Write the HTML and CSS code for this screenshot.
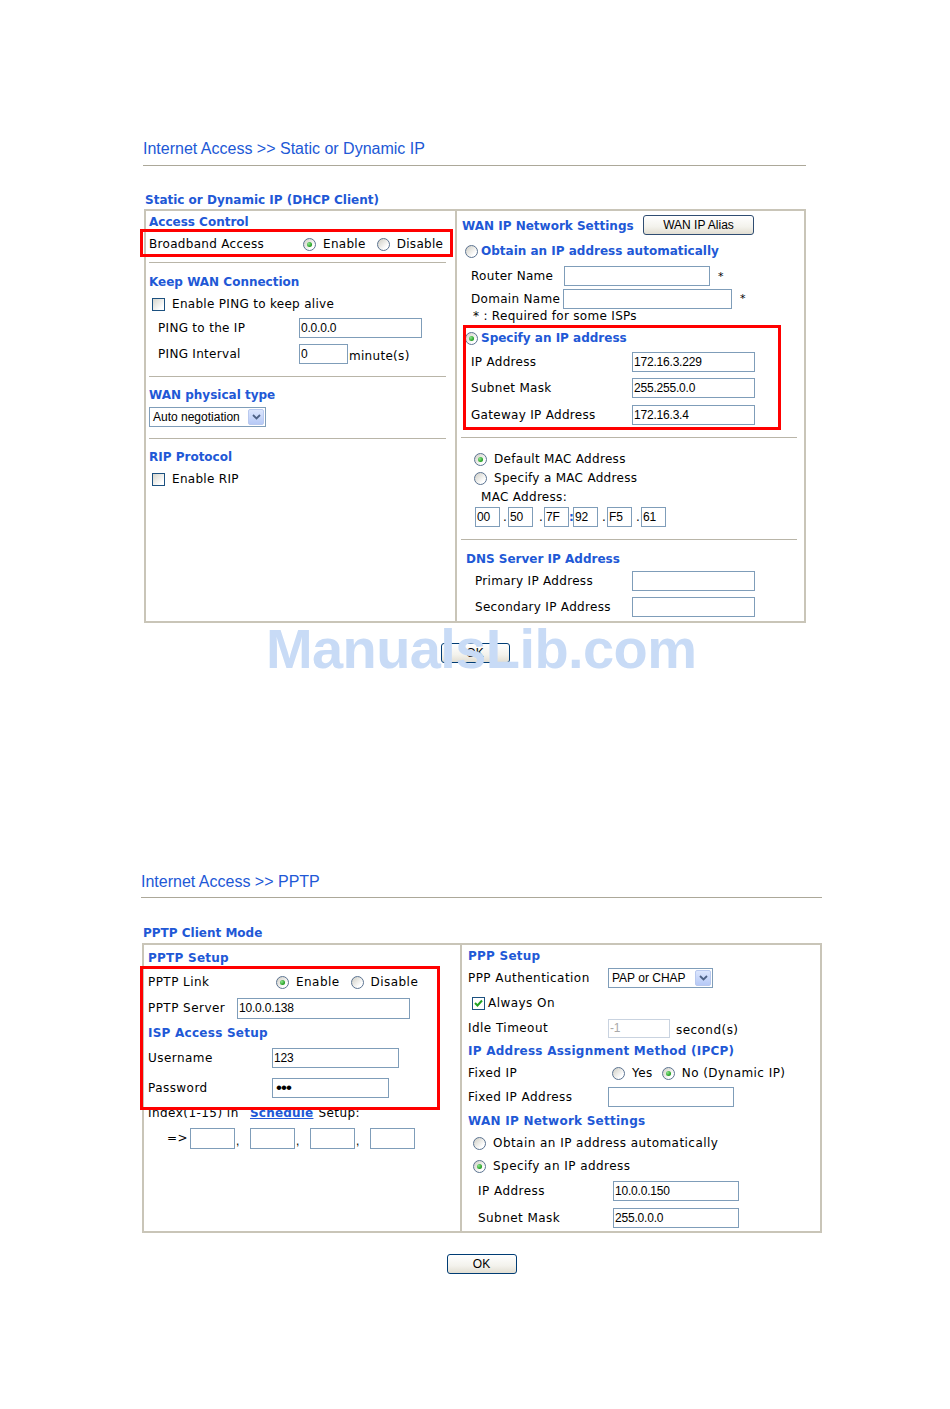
FILE: index.html
```html
<!DOCTYPE html>
<html lang="en">
<head>
    <meta charset="UTF-8">
    <meta name="viewport" content="width=device-width, initial-scale=1.0">
    <title>Internet Access</title>
    <link rel="stylesheet" href="styles.css">
</head>
<body>
    <div class="shot shot-a">
        <h1 class="crumb">Internet Access &gt;&gt; Static or Dynamic IP</h1>
        <div class="sub">Static or Dynamic IP (DHCP Client)</div>
        <div class="panel">
            <div class="col col-left">
                <div class="row head h22">Access Control</div>
                <div class="row h22">
                    <span class="lbl w154">Broadband Access</span>
                    <span class="choice"><span class="radio on"></span>Enable</span>
                    <span class="choice"><span class="radio"></span>Disable</span>
                </div>
                <div class="sep sep-1"></div>
                <div class="row head h24">Keep WAN Connection</div>
                <div class="row h20 in3">
                    <span class="choice"><span class="check"></span>Enable PING to keep alive</span>
                </div>
                <div class="row h28 in9">
                    <span class="lbl w141">PING to the IP</span>
                    <input class="field w123" type="text" value="0.0.0.0">
                </div>
                <div class="row h24 in9">
                    <span class="lbl w141">PING Interval</span>
                    <input class="field w49" type="text" value="0">
                    <span class="unit">minute(s)</span>
                </div>
                <div class="sep sep-2"></div>
                <div class="row head h20">WAN physical type</div>
                <div class="row h24">
                    <div class="select w117">
                        <span>Auto negotiation</span>
                        <span class="arrow"><svg width="9" height="6" viewBox="0 0 9 6"><path d="M1 1 L4.5 4.5 L8 1" fill="none" stroke="#4d6185" stroke-width="1.8"/></svg></span>
                    </div>
                </div>
                <div class="sep sep-3"></div>
                <div class="row head h20">RIP Protocol</div>
                <div class="row h24 in3">
                    <span class="choice"><span class="check"></span>Enable RIP</span>
                </div>
            </div>

            <div class="col col-right">
                <div class="row h22 mt4 top">
                    <span class="head w181 pt5">WAN IP Network Settings</span>
                    <button class="btn alias">WAN IP Alias</button>
                </div>
                <div class="row h28 in3">
                    <span class="choice tight"><span class="radio"></span><span class="head">Obtain an IP address automatically</span></span>
                </div>
                <div class="row h22 in9">
                    <span class="lbl w93">Router Name</span>
                    <input class="field w146" type="text" value="">
                    <span class="star">*</span>
                </div>
                <div class="row h23 in9">
                    <span class="lbl w92">Domain Name</span>
                    <input class="field w169" type="text" value="">
                    <span class="star">*</span>
                </div>
                <div class="row h12 in11 note">* : Required for some ISPs</div>
                <div class="row h20 mt6 in3">
                    <span class="choice tight"><span class="radio on"></span><span class="head">Specify an IP address</span></span>
                </div>
                <div class="row h24 mt2 in9">
                    <span class="lbl w161">IP Address</span>
                    <input class="field w123" type="text" value="172.16.3.229">
                </div>
                <div class="row h24 mt2 in9">
                    <span class="lbl w161">Subnet Mask</span>
                    <input class="field w123" type="text" value="255.255.0.0">
                </div>
                <div class="row h24 mt3 in9">
                    <span class="lbl w161">Gateway IP Address</span>
                    <input class="field w123" type="text" value="172.16.3.4">
                </div>
                <div class="sep sep-4"></div>
                <div class="row h20 in12">
                    <span class="choice"><span class="radio on"></span>Default MAC Address</span>
                </div>
                <div class="row h18 in12">
                    <span class="choice"><span class="radio"></span>Specify a MAC Address</span>
                </div>
                <div class="row h18 mt1 in19">MAC Address:</div>
                <div class="row h20 mt1 in13 mac">
                    <input class="field" type="text" value="00">
                    <span class="dot d8">.</span>
                    <input class="field" type="text" value="50">
                    <span class="dot d11">.</span>
                    <input class="field" type="text" value="7F">
                    <span class="colon">:</span>
                    <input class="field" type="text" value="92">
                    <span class="dot d9">.</span>
                    <input class="field" type="text" value="F5">
                    <span class="dot d9">.</span>
                    <input class="field" type="text" value="61">
                </div>
                <div class="sep sep-5"></div>
                <div class="row head h20 in4">DNS Server IP Address</div>
                <div class="row h20 mt2 in13">
                    <span class="lbl w157">Primary IP Address</span>
                    <input class="field w123" type="text" value="">
                </div>
                <div class="row h20 mt6 in13">
                    <span class="lbl w157">Secondary IP Address</span>
                    <input class="field w123" type="text" value="">
                </div>
            </div>
        </div>
        <div class="actions actions-a">
            <button class="btn ok">OK</button>
        </div>
    </div>

    <div class="shot shot-b">
        <h1 class="crumb">Internet Access &gt;&gt; PPTP</h1>
        <div class="sub">PPTP Client Mode</div>
        <div class="panel">
            <div class="col col-left">
                <div class="row head h20 mt3">PPTP Setup</div>
                <div class="row h24 mt2">
                    <span class="lbl w128">PPTP Link</span>
                    <span class="choice"><span class="radio on"></span>Enable</span>
                    <span class="choice"><span class="radio"></span>Disable</span>
                </div>
                <div class="row h24 mt2">
                    <span class="lbl w89">PPTP Server</span>
                    <input class="field w173 tall" type="text" value="10.0.0.138">
                </div>
                <div class="row head h20 mt3">ISP Access Setup</div>
                <div class="row h22 mt4">
                    <span class="lbl w124">Username</span>
                    <input class="field w127" type="text" value="123">
                </div>
                <div class="row h22 mt8">
                    <span class="lbl w124">Password</span>
                    <input class="field w117 secret" type="password" value="123">
                </div>
                <div class="row h18 mt5">
                    <span class="lbl w102">Index(1-15) in</span>
                    <a class="link" href="#">Schedule</a>
                    <span class="after">Setup:</span>
                </div>
                <div class="row h22 mt5 in19 sched">
                    <span class="arrow-txt">=&gt;</span>
                    <input class="field tall" type="text" value="">
                    <span class="comma">,</span>
                    <input class="field tall" type="text" value="">
                    <span class="comma">,</span>
                    <input class="field tall" type="text" value="">
                    <span class="comma">,</span>
                    <input class="field tall" type="text" value="">
                </div>
            </div>

            <div class="col col-right">
                <div class="row head h20 mt1">PPP Setup</div>
                <div class="row h22 mt1">
                    <span class="lbl w140">PPP Authentication</span>
                    <div class="select w105">
                        <span>PAP or CHAP</span>
                        <span class="arrow"><svg width="9" height="6" viewBox="0 0 9 6"><path d="M1 1 L4.5 4.5 L8 1" fill="none" stroke="#4d6185" stroke-width="1.8"/></svg></span>
                    </div>
                </div>
                <div class="row h20 mt4 in4">
                    <span class="choice tight"><span class="check on"><svg width="9" height="8" viewBox="0 0 9 8"><path d="M1 4 L3.5 6.5 L8 1.5" fill="none" stroke="#21a121" stroke-width="2"/></svg></span>Always On</span>
                </div>
                <div class="row h22 mt4">
                    <span class="lbl w140">Idle Timeout</span>
                    <input class="field w62 off" type="text" value="-1" disabled>
                    <span class="unit u6">second(s)</span>
                </div>
                <div class="row head h20 mt2">IP Address Assignment Method (IPCP)</div>
                <div class="row h22 mt1">
                    <span class="lbl w144">Fixed IP</span>
                    <span class="choice"><span class="radio"></span>Yes</span>
                    <span class="choice near"><span class="radio on"></span>No (Dynamic IP)</span>
                </div>
                <div class="row h22 mt2">
                    <span class="lbl w140">Fixed IP Address</span>
                    <input class="field w126" type="text" value="">
                </div>
                <div class="row head h20 mt3">WAN IP Network Settings</div>
                <div class="row h22 mt1 in5">
                    <span class="choice"><span class="radio"></span>Obtain an IP address automatically</span>
                </div>
                <div class="row h22 mt1 in5">
                    <span class="choice"><span class="radio on"></span>Specify an IP address</span>
                </div>
                <div class="row h24 mt2 in10">
                    <span class="lbl w135">IP Address</span>
                    <input class="field w126" type="text" value="10.0.0.150">
                </div>
                <div class="row h24 mt3 in10">
                    <span class="lbl w135">Subnet Mask</span>
                    <input class="field w126" type="text" value="255.0.0.0">
                </div>
            </div>
        </div>
        <div class="actions actions-b">
            <button class="btn ok ok-b">OK</button>
        </div>
    </div>

    <div class="mark mark-1"></div>
    <div class="mark mark-2"></div>
    <div class="mark mark-3"></div>
    <div class="watermark">ManualsLib.com</div>
</body>
</html>
```

FILE: styles.css
```css
* {
    box-sizing: border-box;
}
body {
    margin: 0;
    position: relative;
    min-height: 1409px;
    background: #fff;
    color: #000;
    font-family: "DejaVu Sans", Verdana, sans-serif;
    font-size: 12px;
    letter-spacing: 0.3px;
}

/* page blocks */
.shot-a {
    width: 663px;
    margin-left: 143px;
    padding-top: 140px;
}
.shot-b {
    width: 681px;
    margin-left: 141px;
    padding-top: 209px;
    letter-spacing: 0.45px;
}
.crumb {
    margin: 0;
    padding-bottom: 7px;
    border-bottom: 1px solid #aca899;
    font: normal 16px/18px "Liberation Sans", Arial, sans-serif;
    letter-spacing: 0;
    color: #2158d6;
}
.shot-b .crumb {
    padding-top: 1px;
    padding-bottom: 6px;
}
.sub {
    margin-top: 26px;
    padding-left: 2px;
    line-height: 16px;
    font-weight: bold;
    letter-spacing: 0;
    color: #2158d6;
}
.shot-b .sub {
    margin-top: 27px;
}
.panel {
    display: flex;
    margin: 1px 0 0 1px;
    border: 2px solid #c9c5b8;
}
.shot-a .panel {
    width: 662px;
}
.shot-b .panel {
    width: 680px;
    margin-top: 2px;
}
.col-left {
    border-right: 2px solid #c9c5b8;
}
.shot-a .col-left {
    width: 311px;
    padding-left: 3px;
}
.shot-a .col-right {
    flex: 1;
    padding: 0 0 4px 5px;
}
.shot-b .col-left {
    width: 318px;
    padding-left: 4px;
}
.shot-b .col-right {
    flex: 1;
    padding: 0 0 1px 6px;
}

/* rows */
.row {
    display: flex;
    align-items: center;
    white-space: nowrap;
}
.row.top {
    align-items: flex-start;
}
.head {
    font-weight: bold;
    letter-spacing: 0;
    color: #2158d6;
}
.shot-b .head {
    letter-spacing: 0.25px;
}
.h12 { height: 12px; }
.h18 { height: 18px; }
.h20 { height: 20px; }
.h22 { height: 22px; }
.h23 { height: 23px; }
.h24 { height: 24px; }
.h28 { height: 28px; }
.mt1 { margin-top: 1px; }
.mt2 { margin-top: 2px; }
.mt3 { margin-top: 3px; }
.mt4 { margin-top: 4px; }
.mt5 { margin-top: 5px; }
.mt6 { margin-top: 6px; }
.mt8 { margin-top: 8px; }
.pt5 { padding-top: 4px; }
.in3 { padding-left: 3px; }
.in4 { padding-left: 4px; }
.in5 { padding-left: 5px; }
.in9 { padding-left: 9px; }
.in10 { padding-left: 10px; }
.in11 { padding-left: 11px; }
.in12 { padding-left: 12px; }
.in13 { padding-left: 13px; }
.in19 { padding-left: 19px; }

.lbl { flex: none; }
.w89 { width: 89px; }
.w92 { width: 92px; }
.w93 { width: 93px; }
.w102 { width: 102px; }
.w124 { width: 124px; }
.w128 { width: 128px; }
.w135 { width: 135px; }
.w140 { width: 140px; }
.w141 { width: 141px; }
.w144 { width: 144px; }
.w154 { width: 154px; }
.w157 { width: 157px; }
.w161 { width: 161px; }
.w181 { width: 181px; }

.sep {
    border-top: 1px solid #b9b5a8;
}
.sep-1 { margin: 7px 9px 7px 0; }
.sep-2 { margin: 10px 9px 8px 0; }
.sep-3 { margin: 9px 9px 8px 0; }
.sep-4 { margin: 10px 7px 11px -1px; }
.sep-5 { margin: 12px 7px 9px -1px; }

/* controls */
.choice {
    display: inline-flex;
    align-items: center;
    gap: 7px;
}
.choice + .choice {
    margin-left: 11px;
}
.choice.near {
    margin-left: 9px;
}
.choice.tight {
    gap: 3px;
}
.radio {
    flex: none;
    display: inline-flex;
    align-items: center;
    justify-content: center;
    width: 13px;
    height: 13px;
    border: 1px solid #5b7391;
    border-radius: 50%;
    background: linear-gradient(135deg, #d5d4cc 10%, #fff 75%);
}
.radio.on::after {
    content: "";
    width: 5px;
    height: 5px;
    border-radius: 50%;
    background: radial-gradient(circle at 35% 35%, #8ee58e, #1f9d1f 70%);
}
.check {
    flex: none;
    display: inline-flex;
    align-items: center;
    justify-content: center;
    width: 13px;
    height: 13px;
    border: 1px solid #1c5180;
    background: linear-gradient(135deg, #dcdbd3 10%, #fff 80%);
}
.check.on {
    background: #fff;
}
.field {
    flex: none;
    height: 20px;
    margin: 0;
    padding: 0 1px;
    border: 1px solid #7f9db9;
    background: #fff;
    font: 12px "Liberation Sans", Arial, sans-serif;
    letter-spacing: -0.2px;
    color: #000;
    outline: none;
}
.field.tall { height: 21px; }
.field.off {
    height: 19px;
    border-color: #c9d3e0;
    color: #a9a9a9;
}
.field.secret {
    padding-left: 3px;
    font-size: 17px;
    letter-spacing: -1px;
}
.w49 { width: 49px; }
.w62 { width: 62px; }
.w105 { width: 105px; }
.w117 { width: 117px; }
.w123 { width: 123px; }
.w126 { width: 126px; }
.w127 { width: 127px; }
.w146 { width: 146px; }
.w169 { width: 169px; }
.w173 { width: 173px; }

.unit {
    padding-top: 4px;
    margin-left: 1px;
}
.unit.u6 {
    margin-left: 6px;
}
.star {
    margin-left: 8px;
    font-size: 11px;
}

.mac .field {
    width: 25px;
}
.dot {
    text-align: right;
    padding-right: 1px;
}
.d8 { width: 8px; }
.d9 { width: 9px; }
.d11 { width: 11px; }
.colon {
    width: 4px;
    font-weight: bold;
    color: #2158d6;
    text-align: center;
}

.sched .field {
    width: 45px;
}
.arrow-txt {
    width: 23px;
}
.comma {
    width: 15px;
    padding: 5px 0 0 1px;
    font: 12px "Liberation Sans", Arial, sans-serif;
}
.link {
    font-weight: bold;
    letter-spacing: 0.2px;
    color: #2158d6;
}
.after {
    margin-left: 5px;
}

.select {
    flex: none;
    display: inline-flex;
    align-items: center;
    height: 20px;
    padding-left: 3px;
    border: 1px solid #7f9db9;
    background: #fff;
    font: 12px "Liberation Sans", Arial, sans-serif;
    letter-spacing: 0;
}
.select .arrow {
    display: flex;
    align-items: center;
    justify-content: center;
    width: 16px;
    height: 16px;
    margin: 0 1px 0 auto;
    border: 1px solid #b9c9ef;
    border-radius: 2px;
    background: linear-gradient(#dce6fd, #b6c9f6);
}

.btn {
    height: 20px;
    padding: 0;
    border: 1px solid #003c74;
    border-radius: 3px;
    background: linear-gradient(#fff, #f3f2ec 60%, #e2ded2);
    font: 12px "Liberation Sans", Arial, sans-serif;
    letter-spacing: 0;
    color: #000;
}
.alias {
    width: 111px;
    border-color: #2f4d72;
}
.ok {
    width: 69px;
}
.ok-b {
    width: 70px;
}
.actions {
    display: flex;
    justify-content: center;
}
.actions-a {
    margin-top: 20px;
    padding-left: 1px;
}
.actions-b {
    margin-top: 21px;
}

/* annotations drawn over the screenshots */
.mark {
    position: absolute;
    border: 3px solid #ff0000;
}
.mark-1 {
    left: 140px;
    top: 229px;
    width: 313px;
    height: 28px;
}
.mark-2 {
    left: 463px;
    top: 325px;
    width: 318px;
    height: 105px;
}
.mark-3 {
    left: 140px;
    top: 966px;
    width: 300px;
    height: 144px;
}
.watermark {
    position: absolute;
    left: 266px;
    top: 621px;
    font: bold 56px/56px "Liberation Sans", Arial, sans-serif;
    letter-spacing: -0.6px;
    color: #c8dbf6;
}
```
